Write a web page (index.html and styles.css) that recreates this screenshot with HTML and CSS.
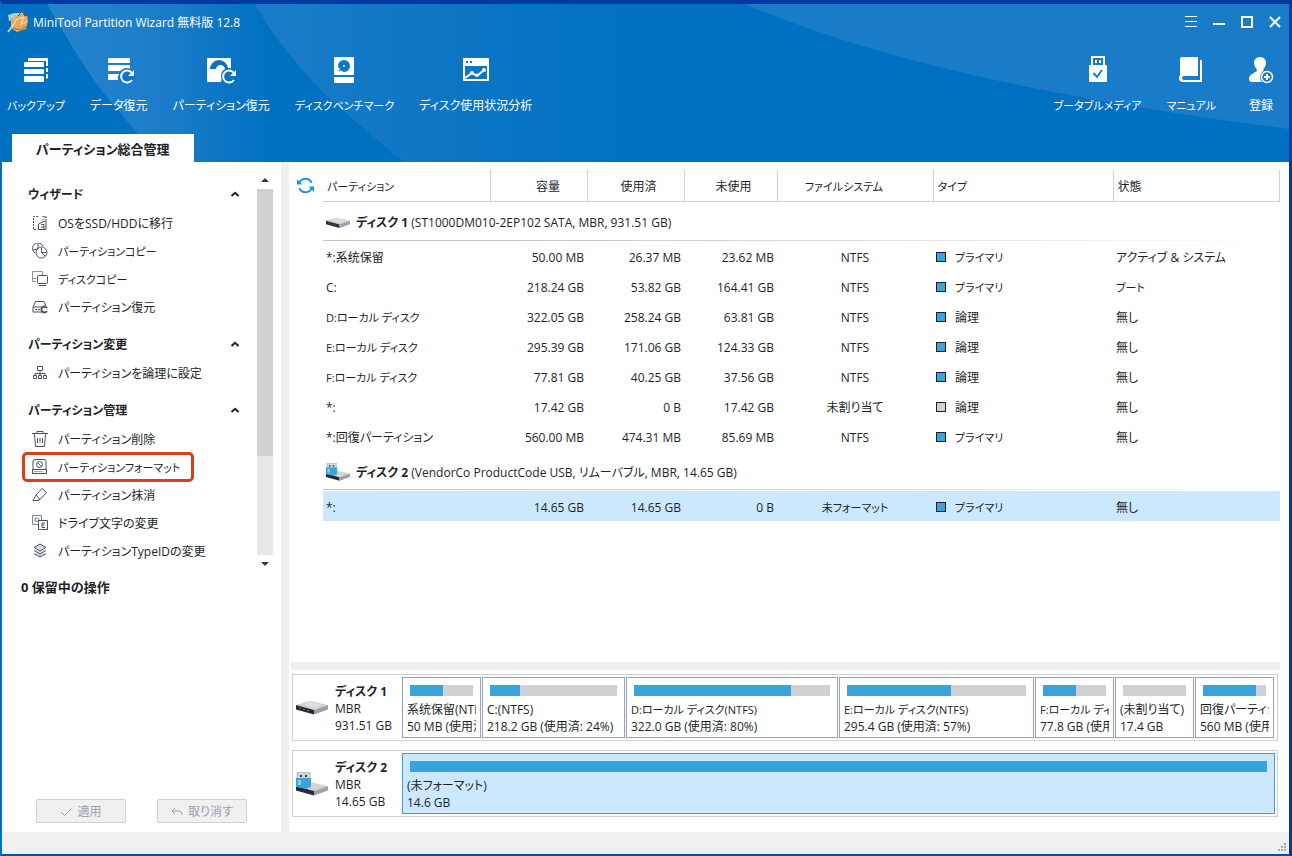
FILE: index.html
```html
<!DOCTYPE html>
<html lang="ja">
<head>
<meta charset="utf-8">
<title>MiniTool Partition Wizard 無料版 12.8</title>
<link rel="stylesheet" href="styles.css">
</head>
<body>
<svg class="sprite" aria-hidden="true">
  <defs>
    <symbol id="disk" viewBox="0 0 32 16">
      <path d="M0 5 14 1 32 5 18 10Z" fill="#cfd1d3"/>
      <path d="M8 4.500 14 2 26 5 18 8Z" fill="#dedfe0"/>
      <path d="M0 5 18 10V14.500L0 9.500Z" fill="#2b2930"/>
      <path d="M18 10 32 5V9.500L18 14.500Z" fill="#98a0ae"/>
      <path d="M3 8h2M7 9.500h2M11 10.500h2" stroke="#6d7688"/>
    </symbol>
    <symbol id="usbdisk" viewBox="0 0 32 24">
      <path d="M0 14 14 10 32 14 18 19Z" fill="#d3d4d6"/>
      <path d="M0 14 18 19V23.500L0 18.500Z" fill="#2b2930"/>
      <path d="M18 19 32 14V18.500L18 23.500Z" fill="#98a0ae"/>
      <path d="M1 .5h13v6H1z" fill="#d2d4d6" stroke="#9aa2ae" stroke-width=".6"/>
      <path d="M4 3h2v2H4zM9 3h2v2H9z" fill="#38404e"/>
      <path d="M0 6h15v9l-5 2-10-2z" fill="#3aa3dd"/>
      <path d="M2 8h3v5H2z" fill="#8ccdf0"/>
      <path d="M22 18h2M26 16h2" stroke="#e0a860"/>
    </symbol>
    <symbol id="chev" viewBox="0 0 10 6"><path d="M1.500 5 5 1.800 8.500 5" fill="none" stroke="#231f28" stroke-width="2"/></symbol>
  </defs>
</svg>
<div class="window">
  <header class="head">
    <svg class="head-bg" viewBox="0 0 1287 158" preserveAspectRatio="none" aria-hidden="true">
      <defs>
        <linearGradient id="g1" gradientUnits="userSpaceOnUse" x1="60" y1="0" x2="270" y2="0"><stop offset="0" stop-color="#2483cd"/><stop offset=".5" stop-color="#1a7cc8"/><stop offset="1" stop-color="#0070c1"/></linearGradient>
        <linearGradient id="g2" gradientUnits="userSpaceOnUse" x1="260" y1="0" x2="620" y2="0"><stop offset="0" stop-color="#1a7cc8"/><stop offset="1" stop-color="#0070c1"/></linearGradient>
      </defs>
      <path d="M45 0C65 35 95 85 118 108Q130 124 138 132V158H400V0Z" fill="url(#g1)"/>
      <path d="M253 0C275 40 310 80 345 110Q380 140 402 158H700V0Z" fill="url(#g2)"/>
      <path d="M743 0C850 45 1000 88 1287 125V0Z" fill="#1a7cc8"/>
    </svg>
    <div class="titlebar">
      <svg class="logo" viewBox="0 0 22 22"><path d="M1 4 7 2 13 2 10 9 2 10Z" fill="#9bd0ee"/><path d="M4 8 13 3 15 1 17 4 20 4 21 10 19 18 10 21 4 17Z" fill="#e9a75c"/><path d="M8 9 17 6 14 13 20 11" stroke="#f6cf96" fill="none" stroke-width="1.500"/><path d="M1 21 9 10" stroke="#cbd8e6" stroke-width="1.500"/><path d="M6 17 14 19 20 15" stroke="#b0682c" fill="none"/><path d="M11 5l2-2M17 5l3-1" stroke="#4a3020"/></svg>
      <h1>MiniTool Partition Wizard 無料版 12.8</h1>
      <div class="controls">
        <button aria-label="メニュー"><svg viewBox="0 0 12 12"><path d="M0 .5h12M0 5.500h12M0 10.500h12" stroke="#fff"/></svg></button>
        <button aria-label="最小化"><svg viewBox="0 0 12 12"><path d="M0 8h12" stroke="#fff" stroke-width="2"/></svg></button>
        <button aria-label="最大化"><svg viewBox="0 0 12 12"><path d="M1 1h10v10H1z" fill="none" stroke="#fff" stroke-width="2"/></svg></button>
        <button aria-label="閉じる"><svg viewBox="0 0 12 12"><path d="M1 1 11 11M11 1 1 11" stroke="#fff" stroke-width="2"/></svg></button>
      </div>
    </div>
    <div class="toolbar">
      <button class="tool kana"><svg viewBox="0 0 28 28"><g fill="#fff"><rect x="2" y="6" width="20" height="5" rx="1"/><rect x="2" y="13" width="20" height="5" rx="1"/><rect x="2" y="20" width="20" height="6" rx="1"/><path d="M7 2h18q1 0 1 1v7h-2V5H6V3q0-1 1-1zM24 12h2v4h-2zM24 18h2v4l-2 1z"/></g></svg><span>バックアップ</span></button>
      <button class="tool"><svg viewBox="0 0 28 28"><g fill="#fff"><rect x="3" y="2" width="22" height="5" rx="1"/><rect x="3" y="9" width="22" height="6" rx="1"/><path d="M3 18h11q-2 3-1 6H4q-1 0-1-1z"/></g><circle cx="22" cy="20" r="8" fill="#0d75c4"/><path d="M27 17A6 6 0 1 0 27 24" fill="none" stroke="#fff" stroke-width="2"/><path d="M29 14v6h-6z" fill="#fff"/></svg><span>データ復元</span></button>
      <button class="tool"><svg viewBox="0 0 28 28"><path d="M3 2h20q1 0 1 1v13H16l-2 10H1q-1 0-1-1V3q0-1 1-1z" fill="#fff"/><path d="M3 13A9 9 0 0 1 21 13L18 14A4 4 0 0 0 9 13Z" fill="#0872c2"/><circle cx="12" cy="13" r="2" fill="#fff"/><circle cx="22" cy="20" r="8" fill="#0872c2"/><path d="M27 17A6 6 0 1 0 27 24" fill="none" stroke="#fff" stroke-width="2"/><path d="M29 14v6h-6z" fill="#fff"/></svg><span>パーティション復元</span></button>
      <button class="tool kana"><svg viewBox="0 0 28 28"><rect x="4" y="1" width="20" height="18" rx="1" fill="#fff"/><rect x="4" y="21" width="20" height="6" rx="1" fill="#fff"/><circle cx="14" cy="10" r="6" fill="#0f76c5"/><circle cx="14" cy="10" r="1" fill="#fff"/><path d="M8 11v6h6z" fill="#fff"/><path d="M9 15l4-3" stroke="#0f76c5" stroke-width="1.500"/></svg><span>ディスクベンチマーク</span></button>
      <button class="tool"><svg viewBox="0 0 28 28"><path d="M2 2h24q1 0 1 1v21q0 1-1 1H2q-1 0-1-1V3q0-1 1-1zM3 10v13h22V10z" fill="#fff" fill-rule="evenodd"/><path d="M4 5h2v2H4zM8 5h2v2H8z" fill="#0a73c3"/><path d="M3 22 10 17 15 20 22 14" fill="none" stroke="#fff" stroke-width="2"/><circle cx="10" cy="17" r="2" fill="#fff"/><circle cx="15" cy="19" r="1.500" fill="#fff"/><circle cx="22" cy="14" r="2" fill="#fff"/></svg><span>ディスク使用状況分析</span></button>
      <button class="tool kana push"><svg viewBox="0 0 28 28"><path d="M7 0h14v10H7zM9 2v7h10V2z" fill="#fff" fill-rule="evenodd"/><path d="M11 4h2v3h-2zM15 4h2v3h-2z" fill="#fff"/><rect x="5" y="9" width="18" height="17" rx="1" fill="#fff"/><path d="M9.500 17 13 21 18 14" stroke="#1a7cc8" fill="none" stroke-width="2"/></svg><span>ブータブルメディア</span></button>
      <button class="tool kana"><svg viewBox="0 0 28 28"><path d="M4 1H21V18H6q-3 0-3 3V3q0-2 2-2z" fill="#fff"/><path d="M23 4h2v22H6q-4 0-4-4 0-4 4-4h15v2H7q-2 0-2 2t2 2h16z" fill="#fff"/></svg><span>マニュアル</span></button>
      <button class="tool signup"><svg viewBox="0 0 28 28"><path d="M13 1c-4 0-6 3-6 6s2 5 3 7c0 3-8 3-8 9 0 2 1 3 3 3h11l4-9-4-3c1-2 3-4 3-7s-2-6-6-6z" fill="#fff"/><circle cx="20" cy="21" r="7" fill="#1a7cc8"/><circle cx="20" cy="21" r="5.500" fill="#1a7cc8" stroke="#fff" stroke-width="1.500"/><path d="M17 21h6M20 18v6" stroke="#fff" stroke-width="2"/></svg><span>登録</span></button>
    </div>
    <div class="tabs"><button class="tab">パーティション総合管理</button></div>
  </header>

  <div class="body">
    <aside class="side">
      <div class="scroller">
        <nav class="menu">
          <section>
            <button class="sect">ウィザード<svg><use href="#chev"/></svg></button>
            <a href="#"><svg viewBox="0 0 16 16"><path d="M6 1.500H1.500v13h4M10 5.500l4-4M10.500 1.500H14V5" stroke-dasharray="2 1"/><path d="M6.500 14.500V9L14 5.500v9zM9 9.500h3v5M9 12h3"/></svg><span>OSをSSD/HDDに移行</span></a>
            <a href="#" class="kana"><svg viewBox="0 0 16 16"><path d="M3 10A5.500 5.500 0 1 1 11 3M6 1v5l-5 1"/><circle cx="9.500" cy="9.500" r="5.500"/><path d="M9.500 5v4.500H14M10 10l3 3"/></svg><span>パーティションコピー</span></a>
            <a href="#" class="kana"><svg viewBox="0 0 16 16"><path d="M4 10.500H.5v-10h10V4M.5 7.500H4" stroke="#8a93a5"/><rect x="5.500" y="4.500" width="10" height="8" rx="1"/><path d="M7 14.500h7"/></svg><span>ディスクコピー</span></a>
            <a href="#"><svg viewBox="0 0 16 16"><path d="M1 8 3.500 2.500H12L14 7M1 8h13M1 8v5h9M3 10.500h2M6 10.500h2"/><path d="M15 9a3 3 0 1 0 0 3" stroke-width="1.800"/></svg><span>パーティション復元</span></a>
          </section>
          <section>
            <button class="sect">パーティション変更<svg><use href="#chev"/></svg></button>
            <a href="#"><svg viewBox="0 0 16 16"><path d="M5.500 1.500h5v4h-5zM8 6v4M3 11V8.500h10V11M1.500 10.500h3v3h-3zM6.500 10.500h3v3h-3zM11.500 10.500h3v3h-3z"/></svg><span>パーティションを論理に設定</span></a>
          </section>
          <section>
            <button class="sect">パーティション管理<svg><use href="#chev"/></svg></button>
            <a href="#"><svg viewBox="0 0 16 16"><path d="M0 2.500h16M5 2V.5h6V2M2.500 3l1 12.500h9l1-12.500M5.500 7v5M8 7v5M10.500 7v5"/></svg><span>パーティション削除</span></a>
            <a href="#" class="kana marked"><svg viewBox="0 0 16 16"><path d="M1 10.500V2.500q0-2 2-2h9q2 0 2 2v8M.5 10.500h14v4H.5z"/><circle cx="7.500" cy="5.500" r="3"/><path d="M5.500 3.500l4 4"/><path d="M2 12.500h9" stroke="#a0a7b5"/></svg><span>パーティションフォーマット</span></a>
            <a href="#"><svg viewBox="0 0 16 16"><path d="M1 13.500 4 8 10 1.500 14.500 5.500 8 12.500 5 13.500zM4 8l4 4.500M1 13.500h6"/></svg><span>パーティション抹消</span></a>
            <a href="#"><svg viewBox="0 0 16 16"><path d="M6 9.500H.5v-9h9V5M3 3h2q2 0 2 2t-2 1H3z" stroke="#7b8497"/><path d="M6.500 5.500h9v9h-9zM13 8h-3v4.500h3M10 10h2.500"/></svg><span>ドライブ文字の変更</span></a>
            <a href="#"><svg viewBox="0 0 16 16"><path d="M2 4.500 8 1l6 3.500L8 8zM2 7.500 8 11l6-3.500M2 10.500 8 14l6-3.500" fill="#d7dae0"/></svg><span>パーティションTypeIDの変更</span></a>
          </section>
        </nav>
        <div class="vbar" aria-hidden="true"><i class="up"></i><div class="track"><div class="thumb"></div></div><i class="down"></i></div>
      </div>
      <h2 class="pending">0 保留中の操作</h2>
      <div class="actions">
        <button disabled><svg viewBox="0 0 12 12"><path d="M1 6 4.500 9.500 11 3"/></svg>適用</button>
        <button disabled><svg viewBox="0 0 12 12"><path d="M4 2 1 5l3 3M1 5h7q3 0 3 4"/></svg>取り消す</button>
      </div>
    </aside>

    <main class="main">
      <div class="list">
        <button class="refresh" aria-label="更新"><svg viewBox="0 0 16 16"><path d="M2 6A6.300 6.300 0 0 1 13.800 5.500M14 10A6.300 6.300 0 0 1 2.200 10.500" fill="none" stroke="#1d93dc" stroke-width="1.800"/><path d="M0 2v5h5zM16 14V9h-5z" fill="#1d93dc"/></svg></button>
        <table>
          <colgroup><col class="c-name"><col class="c-size"><col class="c-size"><col class="c-free"><col class="c-fs"><col class="c-type"><col></colgroup>
          <thead><tr><th class="l kana">パーティション</th><th class="h-size">容量</th><th class="h-used">使用済</th><th class="h-used">未使用</th><th class="h-fs kana">ファイルシステム</th><th class="l kana">タイプ</th><th class="l">状態</th></tr></thead>
          <tbody>
            <tr class="disk"><th colspan="7"><div><svg class="i-disk"><use href="#disk"/></svg><span><b>ディスク 1</b> (ST1000DM010-2EP102 SATA, MBR, 931.51 GB)</span></div></th></tr>
            <tr><td>*:系统保留</td><td>50.00 MB</td><td>26.37 MB</td><td>23.62 MB</td><td>NTFS</td><td class="kana"><i class="sq"></i>プライマリ</td><td>アクティブ &amp; システム</td></tr>
            <tr><td>C:</td><td>218.24 GB</td><td>53.82 GB</td><td>164.41 GB</td><td>NTFS</td><td class="kana"><i class="sq"></i>プライマリ</td><td class="kana">ブート</td></tr>
            <tr><td class="kana">D:ローカル ディスク</td><td>322.05 GB</td><td>258.24 GB</td><td>63.81 GB</td><td>NTFS</td><td><i class="sq"></i>論理</td><td>無し</td></tr>
            <tr><td class="kana">E:ローカル ディスク</td><td>295.39 GB</td><td>171.06 GB</td><td>124.33 GB</td><td>NTFS</td><td><i class="sq"></i>論理</td><td>無し</td></tr>
            <tr><td class="kana">F:ローカル ディスク</td><td>77.81 GB</td><td>40.25 GB</td><td>37.56 GB</td><td>NTFS</td><td><i class="sq"></i>論理</td><td>無し</td></tr>
            <tr><td>*:</td><td>17.42 GB</td><td>0 B</td><td>17.42 GB</td><td>未割り当て</td><td><i class="sq grey"></i>論理</td><td>無し</td></tr>
            <tr><td>*:回復パーティション</td><td>560.00 MB</td><td>474.31 MB</td><td>85.69 MB</td><td>NTFS</td><td class="kana"><i class="sq"></i>プライマリ</td><td>無し</td></tr>
          </tbody>
          <tbody>
            <tr class="disk"><th colspan="7"><div><svg class="i-usb"><use href="#usbdisk"/></svg><span><b>ディスク 2</b> (VendorCo ProductCode USB, リムーバブル, MBR, 14.65 GB)</span></div></th></tr>
            <tr class="sel"><td>*:</td><td>14.65 GB</td><td>14.65 GB</td><td>0 B</td><td class="kana">未フォーマット</td><td class="kana"><i class="sq"></i>プライマリ</td><td>無し</td></tr>
          </tbody>
        </table>
      </div>
      <div class="splitter"></div>
      <div class="map">
        <section class="drive">
          <div class="info"><svg class="m-disk"><use href="#disk"/></svg><div><b>ディスク 1</b><span>MBR</span><span>931.51 GB</span></div></div>
          <div class="parts seven">
            <div class="part"><div class="bar"><div style="width:52%"></div></div><p>系统保留(NTFS)</p><p>50 MB (使用済: 52%)</p></div>
            <div class="part"><div class="bar"><div style="width:24%"></div></div><p>C:(NTFS)</p><p>218.2 GB (使用済: 24%)</p></div>
            <div class="part"><div class="bar"><div style="width:80%"></div></div><p class="kana">D:ローカル ディスク(NTFS)</p><p>322.0 GB (使用済: 80%)</p></div>
            <div class="part"><div class="bar"><div style="width:58%"></div></div><p class="kana">E:ローカル ディスク(NTFS)</p><p>295.4 GB (使用済: 57%)</p></div>
            <div class="part"><div class="bar"><div style="width:52%"></div></div><p class="kana">F:ローカル ディスク(NTFS)</p><p>77.8 GB (使用済: 51%)</p></div>
            <div class="part"><div class="bar"></div><p>(未割り当て)</p><p>17.4 GB</p></div>
            <div class="part"><div class="bar"><div style="width:84%"></div></div><p>回復パーティション(NTFS)</p><p>560 MB (使用済: 84%)</p></div>
          </div>
        </section>
        <section class="drive">
          <div class="info"><svg class="m-usb"><use href="#usbdisk"/></svg><div><b>ディスク 2</b><span>MBR</span><span>14.65 GB</span></div></div>
          <div class="parts">
            <div class="part on"><div class="bar"><div style="width:100%"></div></div><p>(未フォーマット)</p><p>14.6 GB</p></div>
          </div>
        </section>
      </div>
    </main>
  </div>
  <footer class="status"><svg viewBox="0 0 9 9"><path d="M6 0h2v2H6zM3 3h2v2H3zM6 3h2v2H6zM0 6h2v2H0zM3 6h2v2H3zM6 6h2v2H6z" fill="#a6a9b0"/></svg></footer>
</div>
</body>
</html>
```

FILE: styles.css
```css
* { box-sizing: border-box; }
body {
  margin: 0;
  font: 12px/20px "Open Sans", "Noto Sans CJK JP", sans-serif;
  font-feature-settings: "palt";
  color: #231f28;
  background: #fff;
}
h1, h2, p { margin: 0; font-weight: 400; font-size: 12px; }
button { font: inherit; font-feature-settings: inherit; color: inherit; background: none; border: 0; padding: 0; }
.sprite { position: absolute; width: 0; height: 0; }

.window {
  min-height: 100vh;
  display: flex;
  flex-direction: column;
  border: solid #0039a0;
  border-width: 4px 3px 2px 2px;
  border-left-color: #0070c1;
  border-bottom-color: #004fae;
}

/* Header */
.head { position: relative; background: #0070c1; color: #fff; }
.head-bg { position: absolute; inset: 0; width: 100%; height: 100%; }
.titlebar, .toolbar, .tabs { position: relative; display: flex; }
.titlebar { height: 36px; align-items: center; padding-left: 5px; gap: 4px; }
.titlebar h1 { padding-top: 2px; }
.logo { width: 22px; height: 22px; }
.controls { display: flex; margin-left: auto; }
.controls button { width: 28px; height: 28px; display: grid; place-items: center; }
.controls svg { width: 12px; height: 12px; }
.toolbar { height: 94px; padding: 16px 14px 0 5px; gap: 25px; align-items: flex-start; }
.tool { display: flex; flex-direction: column; align-items: center; gap: 12px; white-space: nowrap; }
.tool svg { width: 28px; height: 28px; overflow: visible; }
.push { margin-left: auto; }
.signup { margin-left: 6px; }
.tabs { padding-left: 10px; }
.tab { height: 28px; padding: 2px 24px 0; background: #fff; color: #231f28; font-size: 13px; font-weight: 700; }

.kana { font-size: 11px; }

/* Sidebar */
.body { flex: 1; display: flex; min-height: 0; }
.side { width: 287px; flex: none; display: flex; flex-direction: column; border-right: 8px solid #f0f0f0; }
.scroller { display: flex; padding-right: 8px; }
.menu { flex: 1; padding: 17px 0 1px 21px; }
.menu section { margin-bottom: 8px; }
.sect { width: 100%; height: 30px; display: flex; align-items: center; justify-content: space-between; padding: 2px 17px 0 5px; font-weight: 700; }
.sect svg { width: 10px; height: 6px; margin-bottom: 3px; }
.menu a { width: fit-content; height: 28px; display: flex; align-items: center; gap: 10px; padding: 0 13px 0 9px; color: inherit; text-decoration: none; white-space: nowrap; }
.menu a span { padding-top: 2px; }
.menu a svg { width: 16px; height: 16px; fill: none; stroke: #4a5062; }
.marked { outline: 3px solid #d8401c; outline-offset: -2px; border-radius: 4px; }
.vbar { width: 16px; display: flex; flex-direction: column; align-items: center; padding: 16px 0 8px; gap: 7px; }
.up, .down { border: solid transparent; border-width: 0 4px; }
.up { border-bottom: 4px solid #3a3740; }
.down { border-top: 4px solid #3a3740; }
.track { flex: 1; width: 16px; background: #e8e8e9; }
.thumb { height: 73%; background: #d0d1d3; }
.pending { padding: 3px 0 0 19px; font-size: 13px; font-weight: 700; }
.actions { margin-top: auto; display: flex; gap: 31px; padding: 0 0 9px 34px; }
.actions button { width: 90px; height: 24px; display: flex; align-items: center; justify-content: center; gap: 5px; padding-top: 2px; background: #f0f0f0; border: 1px solid #d0d1d3; border-radius: 2px; color: #9aa0ae; }
.actions svg { width: 12px; height: 12px; fill: none; stroke: #9aa0ae; }

/* Partition list */
.main { flex: 1; min-width: 0; display: flex; flex-direction: column; }
.list { flex: 1; display: flex; align-items: flex-start; padding: 8px 9px 0 8px; gap: 9px; }
.refresh { height: 31px; display: grid; place-items: center; }
.refresh svg { width: 17px; height: 17px; }
table { flex: 1; border-collapse: collapse; table-layout: fixed; width: 100%; }
.c-name { width: 167px; }
.c-size { width: 97px; }
.c-free { width: 93px; }
.c-fs { width: 156px; }
.c-type { width: 180px; }
th, td { padding: 4px 3px 0; font-weight: 400; white-space: nowrap; }
thead th { height: 31px; border: solid #d0d1d3; border-width: 0 1px 1px 0; }
thead .l { text-align: left; padding-left: 4px; }
.h-size { padding-left: 22px; }
.h-used { padding-left: 9px; }
.h-fs { padding-right: 25px; }
td { height: 30px; text-align: right; }
td:first-child, td:nth-child(6), td:nth-child(7) { text-align: left; }
td:nth-child(5) { text-align: center; }
.disk th { height: 40px; text-align: left; background: linear-gradient(90deg, #c4c5c9, #d0d1d3 40%, #fff) 0 38px / 100% 1px no-repeat; }
.disk div { display: flex; align-items: center; gap: 6px; }
.i-disk { width: 24px; height: 12px; }
.i-usb { width: 24px; height: 18px; margin-bottom: 2px; }
.sq { display: inline-block; width: 10px; height: 10px; margin-right: 9px; background: #3aa3dd; border: 1px solid #231f28; }
.grey { background: #d0d1d3; }
.sel { background: #cce8ff; }

/* Disk map */
.splitter { height: 8px; margin: 0 9px 4px 1px; background: #f0f0f0; }
.map { display: grid; gap: 9px; padding: 0 11px 15px 3px; }
.drive { display: flex; border: 1px solid #d0d1d3; padding: 2px; }
.info { width: 107px; flex: none; display: flex; align-items: center; gap: 7px; padding-left: 1px; }
.info div { display: grid; padding-top: 2px; line-height: 17px; }
.m-disk { width: 32px; height: 16px; }
.m-usb { width: 32px; height: 24px; }
.parts { flex: 1; min-width: 0; display: grid; gap: 1px; }
.seven { grid-template-columns: 79fr 143fr 212fr 195fr 79fr 79fr 79fr; padding-right: 1px; }
.part { min-width: 0; border: 1px solid #98a0b3; padding: 7px 4px 2px; line-height: 17px; }
.part p { overflow: hidden; white-space: nowrap; }
.part .kana { font-size: 11px; }
.on { background: #cce8ff; border-color: #3aa3dd; }
.bar { height: 11px; margin: 0 3px 5px; background: #d0d1d3; }
.bar div { height: 100%; background: #3aa3dd; }

.status { height: 22px; display: flex; justify-content: flex-end; align-items: flex-end; padding: 2px; background: #f0f0f0; }
.status svg { width: 9px; height: 9px; }
```
